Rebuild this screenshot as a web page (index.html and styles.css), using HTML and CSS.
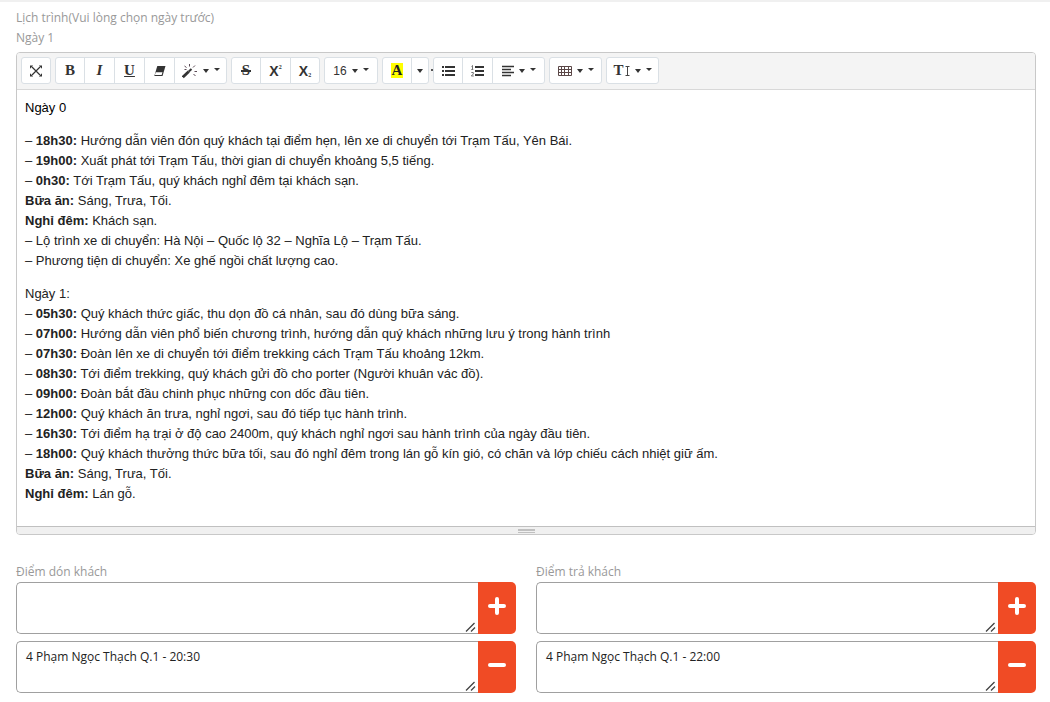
FILE: index.html
```html
<!DOCTYPE html>
<html lang="vi">
<head>
<meta charset="utf-8">
<title>Lịch trình</title>
<link rel="stylesheet" href="styles.css">
</head>
<body>
<main class="page">
  <div class="label">Lịch trình(Vui lòng chọn ngày trước)</div>
  <div class="label" id="day-label">Ngày 1</div>
  <section class="editor">
    <div class="toolbar" role="toolbar" aria-label="Định dạng">
      <div class="group">
        <button type="button" class="tool" aria-label="Toàn màn hình"><svg width="12" height="12" viewBox="0 0 12 12"><path d="M2 2l8 8M10 2L2 10" stroke="#333" stroke-width="1.2"/><path d="M0 .5h3.200L0 3.700zM12 .5v3.200L8.800.5zM0 11.500V8.300l3.200 3.200zM12 11.500H8.800L12 8.300z" fill="#333"/></svg></button>
      </div>
      <div class="group styles">
        <button type="button" class="tool serif">B</button>
        <button type="button" class="tool serif"><i>I</i></button>
        <button type="button" class="tool serif underline">U</button>
        <button type="button" class="tool" aria-label="Xóa định dạng"><svg width="12" height="12" viewBox="0 0 12 12"><path d="M3.300 1H11.500L8.500 11H.3z" fill="#333"/><path d="M1.700 7.200h6.800l-.9 2.700H.9z" fill="#fff"/></svg></button>
        <button type="button" class="tool menu" aria-label="Kiểu"><svg width="16" height="16" viewBox="0 0 16 16"><path d="M.8 14.200l6-5.700" stroke="#333" stroke-width="2.800"/><path d="M6.800 8.500l2.700-2.500" stroke="#333" stroke-width="2"/><path d="M7.500 1v2.500M2.500 3l2 1.500M11 4.500l2-2M12.500 8.500H15M11.500 11l2 2M2.500 6.500h2" stroke="#5b4a55"/></svg><span class="caret"></span><span class="caret small"></span></button>
      </div>
      <div class="group">
        <button type="button" class="tool serif strike" aria-label="Gạch ngang"><span>S</span></button>
        <button type="button" class="tool middle script">X<sup>2</sup></button>
        <button type="button" class="tool script">X<sub>2</sub></button>
      </div>
      <div class="group">
        <button type="button" class="tool menu size">16<span class="caret"></span><span class="caret small"></span></button>
      </div>
      <div class="group color">
        <button type="button" class="tool serif"><span class="mark">A</span></button>
        <button type="button" class="tool narrow" aria-label="Chọn màu"><span class="caret"></span></button>
      </div>
      <div class="group">
        <button type="button" class="tool" aria-label="Danh sách"><svg width="13" height="12" viewBox="0 0 13 12"><path d="M0 2h2M0 6h2M0 10h2M3 2h10M3 6h10M3 10h10" stroke="#333" stroke-width="2"/></svg></button>
        <button type="button" class="tool middle" aria-label="Danh sách số"><svg width="13" height="12" viewBox="0 0 13 12"><path d="M4 2h9M4 6h9M4 10h9" stroke="#333" stroke-width="2"/><path d="M.5 1.500L1.500.5V4M.3 4.500h2M.3 7.500h2v1.500l-2 2h2.500" stroke="#555" stroke-width=".8" fill="none"/></svg></button>
        <button type="button" class="tool menu" aria-label="Căn lề"><svg width="12" height="12" viewBox="0 0 12 12"><path d="M0 1.500h12M0 4.500h9M0 7.500h12M0 10.500h9" stroke="#333" stroke-width="1.400"/></svg><span class="caret"></span><span class="caret small"></span></button>
      </div>
      <div class="group">
        <button type="button" class="tool menu" aria-label="Bảng"><svg width="14" height="12" viewBox="0 0 14 12"><path d="M.5 1.500h13v9H.5zM0 4.500h14M0 7.500h14M3.500 1v10M6.500 1v10M10.500 1v10" fill="none" stroke="#5b4747"/></svg><span class="caret"></span><span class="caret small"></span></button>
      </div>
      <div class="group">
        <button type="button" class="tool menu serif height" aria-label="Chiều cao dòng">T<svg width="5" height="12" viewBox="0 0 5 12"><path d="M2.500 1v10M.5 1.500h4M.5 10.500h4" fill="none" stroke="#444"/></svg><span class="caret"></span><span class="caret small"></span></button>
      </div>
    </div>
    <div class="content" contenteditable="true" role="textbox" aria-multiline="true" aria-labelledby="day-label" spellcheck="false">
      <p class="first">Ngày 0</p>
      <p>– <b>18h30:</b> Hướng dẫn viên đón quý khách tại điểm hẹn, lên xe di chuyển tới Trạm Tấu, Yên Bái.<br>
      – <b>19h00:</b> Xuất phát tới Trạm Tấu, thời gian di chuyển khoảng 5,5 tiếng.<br>
      – <b>0h30:</b> Tới Trạm Tấu, quý khách nghỉ đêm tại khách sạn.<br>
      <b>Bữa ăn:</b> Sáng, Trưa, Tối.<br>
      <b>Nghỉ đêm:</b> Khách sạn.<br>
      – Lộ trình xe di chuyển: Hà Nội – Quốc lộ 32 – Nghĩa Lộ – Trạm Tấu.<br>
      – Phương tiện di chuyển: Xe ghế ngồi chất lượng cao.</p>
      <p>Ngày 1:<br>
      – <b>05h30:</b> Quý khách thức giấc, thu dọn đồ cá nhân, sau đó dùng bữa sáng.<br>
      – <b>07h00:</b> Hướng dẫn viên phổ biến chương trình, hướng dẫn quý khách những lưu ý trong hành trình<br>
      – <b>07h30:</b> Đoàn lên xe di chuyển tới điểm trekking cách Trạm Tấu khoảng 12km.<br>
      – <b>08h30:</b> Tới điểm trekking, quý khách gửi đồ cho porter (Người khuân vác đồ).<br>
      – <b>09h00:</b> Đoàn bắt đầu chinh phục những con dốc đầu tiên.<br>
      – <b>12h00:</b> Quý khách ăn trưa, nghỉ ngơi, sau đó tiếp tục hành trình.<br>
      – <b>16h30:</b> Tới điểm hạ trại ở độ cao 2400m, quý khách nghỉ ngơi sau hành trình của ngày đầu tiên.<br>
      – <b>18h00:</b> Quý khách thưởng thức bữa tối, sau đó nghỉ đêm trong lán gỗ kín gió, có chăn và lớp chiếu cách nhiệt giữ ấm.<br>
      <b>Bữa ăn:</b> Sáng, Trưa, Tối.<br>
      <b>Nghỉ đêm:</b> Lán gỗ.</p>
    </div>
    <div class="resizebar"><span class="grip"></span></div>
  </section>
  <div class="points">
    <section class="point">
      <label class="label" for="pickup-new">Điểm dón khách</label>
      <div class="row">
        <div class="field"><textarea id="pickup-new"></textarea><svg class="corner" width="11" height="10" viewBox="0 0 11 10"><path d="M1 9.500L9.500 1M6 9.500l4-4" stroke="#444" stroke-width="1.300"/></svg></div>
        <button type="button" class="action" aria-label="Thêm"><svg width="18" height="18" viewBox="0 0 18 18"><path d="M2 9h14M9 2v14" stroke="#fff" stroke-width="4" stroke-linecap="round"/></svg></button>
      </div>
      <div class="row">
        <div class="field"><textarea aria-label="Điểm dón khách 1" spellcheck="false">4 Phạm Ngọc Thạch Q.1 - 20:30</textarea><svg class="corner" width="11" height="10" viewBox="0 0 11 10"><path d="M1 9.500L9.500 1M6 9.500l4-4" stroke="#444" stroke-width="1.300"/></svg></div>
        <button type="button" class="action" aria-label="Xóa"><svg width="18" height="18" viewBox="0 0 18 18"><path d="M2 9h14" stroke="#fff" stroke-width="4" stroke-linecap="round"/></svg></button>
      </div>
    </section>
    <section class="point">
      <label class="label" for="drop-new">Điểm trả khách</label>
      <div class="row">
        <div class="field"><textarea id="drop-new"></textarea><svg class="corner" width="11" height="10" viewBox="0 0 11 10"><path d="M1 9.500L9.500 1M6 9.500l4-4" stroke="#444" stroke-width="1.300"/></svg></div>
        <button type="button" class="action" aria-label="Thêm"><svg width="18" height="18" viewBox="0 0 18 18"><path d="M2 9h14M9 2v14" stroke="#fff" stroke-width="4" stroke-linecap="round"/></svg></button>
      </div>
      <div class="row">
        <div class="field"><textarea aria-label="Điểm trả khách 1" spellcheck="false">4 Phạm Ngọc Thạch Q.1 - 22:00</textarea><svg class="corner" width="11" height="10" viewBox="0 0 11 10"><path d="M1 9.500L9.500 1M6 9.500l4-4" stroke="#444" stroke-width="1.300"/></svg></div>
        <button type="button" class="action" aria-label="Xóa"><svg width="18" height="18" viewBox="0 0 18 18"><path d="M2 9h14" stroke="#fff" stroke-width="4" stroke-linecap="round"/></svg></button>
      </div>
    </section>
  </div>
</main>
</body>
</html>
```
FILE: styles.css
```css
* { box-sizing: border-box; }
body {
  margin: 0;
  background: #fff;
  color: #222;
  font-family: "Open Sans", "Noto Sans", sans-serif;
  font-size: 12px;
}
.page {
  border-top: 2px solid #f0f0f0;
  padding: 6px 14px 9px 16px;
}
.label {
  display: block;
  line-height: 20px;
  color: #999;
  font-weight: 500;
}
.editor {
  margin-top: 4px;
  border: 1px solid #c8c8c8;
  border-radius: 4px;
  overflow: hidden;
}
.toolbar {
  display: flex;
  flex-wrap: wrap;
  gap: 4px;
  padding: 4px 4px 5px;
  background: #f4f4f4;
  border-bottom: 1px solid #d8d8d8;
}
.group {
  display: flex;
  position: relative;
}
.tool {
  display: flex;
  align-items: center;
  justify-content: center;
  width: 30px;
  height: 27px;
  margin: 0;
  padding: 0;
  border: 1px solid #dae0e5;
  background: #fff;
  color: #333;
  font: 12px "Liberation Sans", Arial, sans-serif;
}
.tool + .tool { margin-left: -1px; }
.tool.middle { width: 31px; }
.styles .tool + .tool { width: 31px; }
.group .tool:first-child { border-radius: 3px 0 0 3px; }
.group .tool:last-child { border-radius: 0 3px 3px 0; }
.group .tool:only-child { border-radius: 3px; }
.group .tool.menu { width: 53px; gap: 5px; }
.group .tool.size { width: 54px; }
.tool.serif {
  font-family: "Liberation Serif", "Times New Roman", serif;
  font-size: 15px;
  font-weight: 700;
}
.underline { text-decoration: underline; }
.strike span {
  padding: 0 1px;
  background: linear-gradient(#333, #333) center / 100% 2px no-repeat;
}
.tool.script { font-size: 14px; font-weight: 700; }
.script sup, .script sub { font: 700 6px "Liberation Serif", serif; }
.script sup { margin: 0 0 7px; }
.script sub { margin: 9px 0 0; }
.mark {
  padding: 0 1px;
  background: #ff0;
  color: #222;
  line-height: 15px;
}
.narrow { width: 18px; }
.caret {
  border: 3px solid transparent;
  border-top: 4px solid #333;
  border-bottom: 0;
}
.caret.small { border-top-width: 3px; margin-bottom: 2px; }
.color::after {
  content: "";
  position: absolute;
  right: -4px;
  top: 12px;
  width: 2px;
  height: 2px;
  background: #555;
}
.height svg { margin-left: -4px; }
.content {
  padding: 8px 8px 9px;
  font-family: "Liberation Sans", Arial, sans-serif;
  font-size: 13px;
  line-height: 20px;
  outline: 0;
}
.content p { margin: 0 0 13px; }
.content .first { color: #000; }
.resizebar {
  display: flex;
  justify-content: center;
  height: 8px;
  padding-top: 2px;
  background: #f0f0f0;
  border-top: 1px solid #c0c0c0;
}
.grip {
  width: 17px;
  height: 4px;
  border-top: 2px solid #c0c0c0;
  border-bottom: 1px solid #c0c0c0;
}
.points {
  display: grid;
  grid-template-columns: 1fr 1fr;
  gap: 20px;
  margin-top: 27px;
}
.row { display: flex; }
.row + .row { margin-top: 7px; }
.field {
  position: relative;
  display: flex;
  flex: 1;
}
textarea {
  width: 100%;
  height: 52px;
  padding: 5px 9px;
  resize: none;
  border: 1px solid #a0a0a0;
  border-right: 0;
  border-radius: 5px 0 0 5px;
  background: #fff;
  color: #222;
  font: 12px/20px "Open Sans", "Noto Sans", sans-serif;
}
.corner {
  position: absolute;
  right: 2px;
  bottom: 2px;
}
.action {
  display: flex;
  align-items: center;
  justify-content: center;
  width: 38px;
  padding: 0 0 4px;
  border: 0;
  border-radius: 0 5px 5px 0;
  background: #f04b25;
}
```
